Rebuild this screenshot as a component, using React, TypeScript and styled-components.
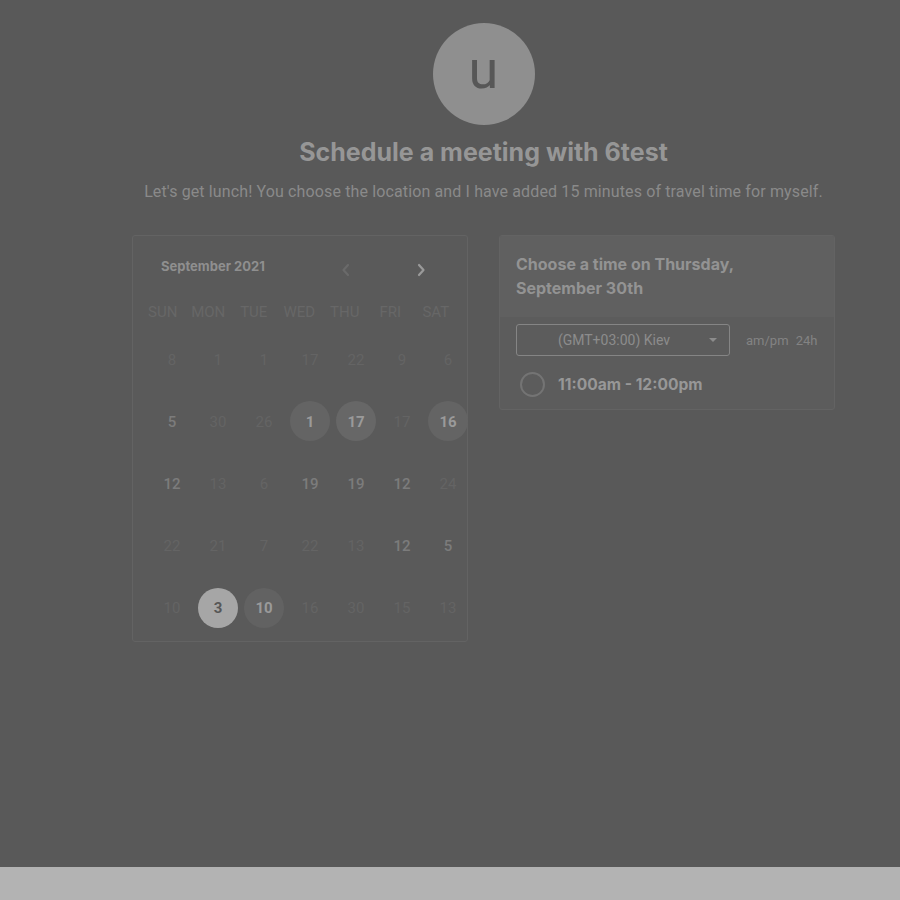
import styled, { createGlobalStyle } from 'styled-components';

const GlobalStyle = createGlobalStyle`
  html, body {
    margin: 0;
    padding: 0;
    background: #595959;
  }
  body {
    font-family: Roboto, "Liberation Sans", sans-serif;
  }
`

const Screen = styled.div`
  display: flex;
  flex-direction: column;
  width: 900px;
  height: 900px;
`

const Backdrop = styled.div`
  flex: 1;
  background: #595959;
`

const Footer = styled.div`
  height: 33px;
  background: #b3b3b3;
`

const Content = styled.div`
  display: flex;
  flex-direction: column;
  align-items: center;
  width: 703px;
  margin-left: 132px;
  padding-top: 23px;
`

const Avatar = styled.div`
  display: flex;
  align-items: center;
  justify-content: center;
  width: 102px;
  height: 102px;
  border-radius: 50%;
  background: #8f8f8f;
  color: #575757;
  font-size: 54px;
  line-height: 1;
  padding-bottom: 8px;
  box-sizing: border-box;
`

const Title = styled.h1`
  margin: 11px 0 0;
  font-family: Inter, "Liberation Sans", sans-serif;
  font-weight: 700;
  font-size: 25px;
  line-height: 32px;
  color: #969696;
`

const Subtitle = styled.p`
  margin: 12px 0 0;
  font-size: 16px;
  line-height: 24px;
  letter-spacing: 0.13px;
  color: #8a8a8a;
  white-space: nowrap;
`

const Panels = styled.div`
  display: flex;
  align-items: flex-start;
  gap: 31px;
  width: 100%;
  margin-top: 31px;
`

const CalendarCard = styled.div`
  width: 336px;
  height: 407px;
  box-sizing: border-box;
  border: 1px solid #636363;
  border-radius: 3px;
  background: #5a5a5a;
`

const MonthHeader = styled.div`
  display: flex;
  align-items: center;
  justify-content: space-between;
  height: 62px;
  padding: 0 31px 0 28px;
`

const MonthLabel = styled.span`
  font-family: Inter, "Liberation Sans", sans-serif;
  font-weight: 700;
  font-size: 13px;
  color: #8f8f8f;
  margin-top: -2px;
`

const Nav = styled.div`
  display: flex;
  gap: 45px;
  margin-top: 6px;
`

const NavButton = styled.button<{ $active?: boolean }>`
  display: flex;
  align-items: center;
  justify-content: center;
  width: 30px;
  height: 24px;
  padding: 0;
  border: 0;
  background: none;
  color: ${p => (p.$active ? '#9a9a9a' : '#6a6a6a')};
`

const WeekRow = styled.div`
  display: grid;
  grid-template-columns: repeat(7, 45.5px);
  height: 28px;
  padding-left: 7px;
  align-items: center;
`

const WeekDay = styled.span`
  text-align: center;
  font-size: 15px;
  color: #676767;
`

const DaysGrid = styled.div`
  display: grid;
  grid-template-columns: repeat(7, 46px);
  grid-template-rows: 62px 62px 62px 62px 63px;
  padding-left: 16px;
  margin-top: 2px;
`

type Tone = 'dim' | 'mid' | 'on' | 'busy' | 'texture' | 'today'

const DayCell = styled.div`
  display: flex;
  align-items: center;
  justify-content: center;
`

const DayBubble = styled.span<{ $tone: Tone }>`
  display: flex;
  align-items: center;
  justify-content: center;
  width: 40px;
  height: 40px;
  border-radius: 50%;
  font-size: 15px;
  padding-top: 1px;
  box-sizing: border-box;
  font-weight: ${p => (p.$tone === 'dim' ? 400 : p.$tone === 'mid' ? 500 : 700)};
  color: ${p =>
    p.$tone === 'dim' ? '#646464' :
    p.$tone === 'mid' ? '#7c7c7c' :
    p.$tone === 'today' ? '#575757' : '#9a9a9a'};
  background: ${p =>
    p.$tone === 'today' ? '#a6a6a6' :
    p.$tone === 'busy' ? '#676767' :
    p.$tone === 'texture' ? '#646464' :
    p.$tone === 'on' ? '#626262' : 'transparent'};
`

const TimeCard = styled.div`
  width: 336px;
  box-sizing: border-box;
  border: 1px solid #636363;
  border-radius: 3px;
  background: #5c5c5c;
  overflow: hidden;
`

const TimeHeader = styled.div`
  background: #606060;
  padding: 16px 16px 17px;
  font-family: Inter, "Liberation Sans", sans-serif;
  font-weight: 700;
  font-size: 16px;
  line-height: 24px;
  color: #939393;
`

const TimeBody = styled.div`
  display: flex;
  flex-direction: column;
  padding: 7px 16px 0;
`

const ZoneRow = styled.div`
  display: flex;
  align-items: center;
  gap: 16px;
`

const Select = styled.div`
  position: relative;
  display: flex;
  align-items: center;
  justify-content: center;
  width: 214px;
  height: 32px;
  box-sizing: border-box;
  border: 1px solid #858585;
  border-radius: 3px;
  font-size: 14px;
  color: #8c8c8c;
  padding-right: 18px;
`

const Caret = styled.span`
  position: absolute;
  right: 12px;
  top: 13px;
  width: 0;
  height: 0;
  border-left: 4px solid transparent;
  border-right: 4px solid transparent;
  border-top: 4px solid #8c8c8c;
`

const FormatToggle = styled.span`
  font-size: 13px;
  color: #838383;
  word-spacing: 4px;
`

const Slot = styled.div`
  display: flex;
  align-items: center;
  gap: 13px;
  height: 49px;
  margin-top: 4px;
  padding-left: 4px;
`

const Radio = styled.span`
  width: 21px;
  height: 21px;
  border-radius: 50%;
  border: 2px solid #747474;
`

const SlotLabel = styled.span`
  font-family: Inter, "Liberation Sans", sans-serif;
  font-weight: 700;
  font-size: 15.6px;
  color: #979797;
`

const weekDays = ['SUN', 'MON', 'TUE', 'WED', 'THU', 'FRI', 'SAT']

const rows: [string, Tone][][] = [
  [['8', 'dim'], ['1', 'dim'], ['1', 'dim'], ['17', 'dim'], ['22', 'dim'], ['9', 'dim'], ['6', 'dim']],
  [['5', 'mid'], ['30', 'dim'], ['26', 'dim'], ['1', 'texture'], ['17', 'busy'], ['17', 'dim'], ['16', 'texture']],
  [['12', 'mid'], ['13', 'dim'], ['6', 'dim'], ['19', 'mid'], ['19', 'mid'], ['12', 'mid'], ['24', 'dim']],
  [['22', 'dim'], ['21', 'dim'], ['7', 'dim'], ['22', 'dim'], ['13', 'dim'], ['12', 'mid'], ['5', 'mid']],
  [['10', 'dim'], ['3', 'today'], ['10', 'on'], ['16', 'dim'], ['30', 'dim'], ['15', 'dim'], ['13', 'dim']],
]

const Chevron = ({ dir }: { dir: 'left' | 'right' }) => (
  <svg width="10" height="14" viewBox="0 0 10 14" fill="none" stroke="currentColor" strokeWidth="2.2" strokeLinecap="round" strokeLinejoin="round">
    {dir === 'left' ? <path d="M7 2 L2.5 7 L7 12" /> : <path d="M3 2 L7.5 7 L3 12" />}
  </svg>
)

export default function App() {
  return (
    <>
      <GlobalStyle />
      <Screen>
        <Backdrop>
          <Content>
            <Avatar>u</Avatar>
            <Title>Schedule a meeting with 6test</Title>
            <Subtitle>Let's get lunch! You choose the location and I have added 15 minutes of travel time for myself.</Subtitle>

            <Panels>
              <CalendarCard>
                <MonthHeader>
                  <MonthLabel>September 2021</MonthLabel>
                  <Nav>
                    <NavButton><Chevron dir="left" /></NavButton>
                    <NavButton $active><Chevron dir="right" /></NavButton>
                  </Nav>
                </MonthHeader>

                <WeekRow>
                  {weekDays.map(d => <WeekDay key={d}>{d}</WeekDay>)}
                </WeekRow>

                <DaysGrid>
                  {rows.flat().map(([day, tone], i) => (
                    <DayCell key={i}>
                      <DayBubble $tone={tone}>{day}</DayBubble>
                    </DayCell>
                  ))}
                </DaysGrid>
              </CalendarCard>

              <TimeCard>
                <TimeHeader>
                  Choose a time on Thursday,<br />September 30th
                </TimeHeader>
                <TimeBody>
                  <ZoneRow>
                    <Select>
                      (GMT+03:00) Kiev
                      <Caret />
                    </Select>
                    <FormatToggle>am/pm 24h</FormatToggle>
                  </ZoneRow>
                  <Slot>
                    <Radio />
                    <SlotLabel>11:00am - 12:00pm</SlotLabel>
                  </Slot>
                </TimeBody>
              </TimeCard>
            </Panels>
          </Content>
        </Backdrop>
        <Footer />
      </Screen>
    </>
  );
}
